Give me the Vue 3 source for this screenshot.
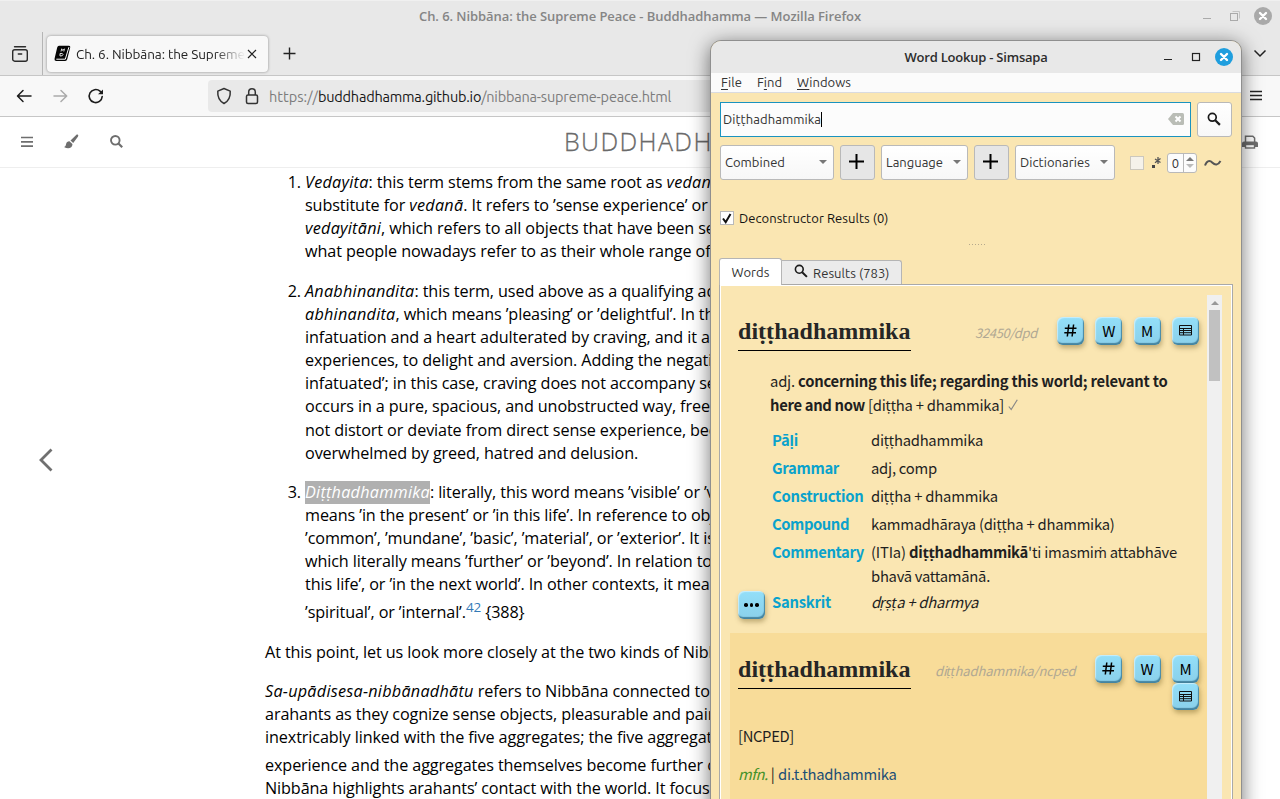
<script setup>
// Spreads the letters of a label so that it takes the given width in pixels.
const vFit = {
  mounted(el, { value }) {
    const count = [...el.textContent].length
    const natural = el.getBoundingClientRect().width
    el.style.letterSpacing = (value - natural) / count + 'px'
  },
}

const items = [
  {
    n: 1,
    lines: [
      '<i>Vedayita</i>: this term stems from the same root as <i>vedanā</i>, and is a',
      'substitute for <i>vedanā</i>. It refers to ’sense experience’ or to the',
      '<i>vedayitāni</i>, which refers to all objects that have been sensed',
      'what people nowadays refer to as their whole range of life',
    ],
  },
  {
    n: 2,
    lines: [
      '<i>Anabhinandita</i>: this term, used above as a qualifying adjective',
      '<i>abhinandita</i>, which means ’pleasing’ or ’delightful’. In this way',
      'infatuation and a heart adulterated by craving, and it also',
      'experiences, to delight and aversion. Adding the negative',
      'infatuated’; in this case, craving does not accompany sense',
      'occurs in a pure, spacious, and unobstructed way, free from',
      'not distort or deviate from direct sense experience, because',
      'overwhelmed by greed, hatred and delusion.',
    ],
  },
  {
    n: 3,
    lines: [
      '<i class="sel">Diṭṭhadhammika</i>: literally, this word means ’visible’ or ’visible',
      'means ’in the present’ or ’in this life’. In reference to objects',
      '’common’, ’mundane’, ’basic’, ’material’, or ’exterior’. It is the',
      'which literally means ’further’ or ’beyond’. In relation to time',
      'this life’, or ’in the next world’. In other contexts, it means',
      '’spiritual’, or ’internal’.<b class="note">42</b> {388}',
    ],
  },
]

const rows = [
  { k: 'Pāḷi', kw: 26, v: 'diṭṭhadhammika', w: 112 },
  { k: 'Grammar', kw: 67, v: 'adj, comp', w: 66 },
  { k: 'Construction', kw: 91.5, v: 'diṭṭha + dhammika', w: 127 },
  { k: 'Compound', kw: 77, v: 'kammadhāraya (diṭṭha + dhammika)', w: 243.5 },
]
</script>

<template>
  <div class="desk">
    <div class="ff-title">
      <span v-fit="442">Ch. 6. Nibbāna: the Supreme Peace - Buddhadhamma — Mozilla Firefox</span>
      <svg class="ff-ctl" width="80" height="32" viewBox="0 0 80 32" fill="none">
        <path d="M3 18.5h8" stroke="#aaa" />
        <path d="M32.5 11.5h7v7" stroke="#c4c4c4" />
        <rect x="30.500" y="13.500" width="7" height="7" stroke="#aaa" />
        <circle cx="63" cy="16" r="9" fill="#a9a9a9" />
        <path d="M60 13l6 6m0-6l-6 6" stroke="#fff" stroke-width="2.400" stroke-linecap="round" />
      </svg>
    </div>
    <div class="ff-tabs">
      <div class="ff-view">
        <svg width="18" height="18" viewBox="0 0 18 18" fill="none" stroke="#2b2b2b" stroke-width="1.400" stroke-linecap="round">
          <path d="M3.500 1.700h11" /><rect x="1.700" y="4.700" width="14.600" height="11.500" rx="2" /><path d="M7.300 9h3.400" />
        </svg>
      </div>
      <div class="ff-tab">
        <svg width="17" height="17" viewBox="0 0 17 17">
          <path d="M5 .8h10q1.600 0 1.200 1.600l-3 11.800q-.4 1.700-2 1.700H2Q0 15.800.6 13.500L3.200 2.400Q3.600.8 5 .8z" fill="#050505" />
          <path d="M2.300 14.200h9l3.600-12" stroke="#fff" stroke-width="1" fill="none" />
          <path d="M7 6.500l.7-2.700 1 1.700 1.700-1.700-.6 2.700M6 11V8.500q3-.6 3 1t-3 1.500" stroke="#ddd" fill="none" />
        </svg>
        <span class="ff-name"><span v-fit="169">Ch. 6. Nibbāna: the Supreme</span></span>
        <svg width="10" height="10" viewBox="0 0 10 10" stroke="#222" stroke-width="1.200"><path d="M1 1l8 8M9 1L1 9" /></svg>
      </div>
      <svg class="ff-plus" width="13" height="13" viewBox="0 0 13 13" stroke="#222" stroke-width="1.400"><path d="M6.500 .5v12M.5 6.500h12" /></svg>
      <svg class="ff-down" width="14" height="9" viewBox="0 0 14 9" fill="none" stroke="#222" stroke-width="1.500"><path d="M1.500 1.500L7 7l5.500-5.500" /></svg>
    </div>
    <div class="ff-nav">
      <svg class="ff-arrows" width="90" height="20" viewBox="0 0 90 20" fill="none" stroke-width="1.500" stroke-linecap="round" stroke-linejoin="round">
        <path d="M15 10H1.800M7 4.500L1.500 10 7 15.500" stroke="#1c1c1c" />
        <path d="M38 10h12.500M45 4.500L50.700 10 45 15.500" stroke="#aaa" />
        <path d="M86.200 10.500A6.500 6.500 0 1 1 84 5.200l2 1.800" stroke="#1c1c1c" stroke-width="1.600" />
        <path d="M87 3.500V8.200h-5z" fill="#1c1c1c" />
      </svg>
      <div class="ff-url">
        <svg width="16" height="18" viewBox="0 0 16 18" fill="none" stroke="#333" stroke-width="1.500"><path d="M8 1.500l6.200 2.600c.4 5-1 9.600-6.200 12.400C2.800 13.700 1.400 9.100 1.800 4.100z" stroke-linejoin="round" /></svg>
        <svg width="14" height="18" viewBox="0 0 14 18" fill="none" stroke="#333" stroke-width="1.500"><rect x="1.500" y="8" width="11" height="8.500" rx="1.500" /><path d="M3.700 8V5a3.300 3.300 0 0 1 6.600 0v3" /></svg>
        <span class="ff-addr"><span v-fit="49">https://</span><em v-fit="163">buddhadhamma.github.io</em><span v-fit="190">/nibbana-supreme-peace.html</span></span>
      </div>
      <svg class="ff-menu" width="14" height="12" viewBox="0 0 14 12" stroke="#222" stroke-width="1.300"><path d="M1 1.500h12M1 5.500h12M1 9.500h12" /></svg>
    </div>
    <div class="bar">
      <svg width="12" height="12" viewBox="0 0 12 12" stroke="#6e6e6e" stroke-width="1.700"><path d="M0 1.500h12M0 5.800h12M0 10.100h12" /></svg>
      <svg class="brush" width="15" height="15" viewBox="0 0 15 15" fill="#6e6e6e"><path d="M13.600.6c.9.5.8 1.300.3 2.100L9.200 9 6.500 6.600 12.200 1c.5-.5 1-.6 1.400-.4zM5.700 7.400l2.700 2.500c.4 4-4.200 5.700-8.400 3 1.800-.5 1.700-1.300 2.100-2.900.4-1.700 1.900-2.900 3.600-2.600z" /></svg>
      <svg class="glass" width="13" height="13" viewBox="0 0 13 13" fill="none" stroke="#6e6e6e"><circle cx="5.300" cy="5.300" r="4.300" stroke-width="1.900" /><path d="M8.500 8.500l3.700 3.700" stroke-width="2.200" /></svg>
      <span class="brand">BUDDHADHAMMA</span>
      <svg class="print" width="16" height="14" viewBox="0 0 16 14"><path d="M3.500 7V1.200h7.300l1.800 1.900V7" fill="#fff" stroke="#6e6e6e" stroke-width="1.500" /><path d="M0 8.500Q0 6.500 2 6.500h12q2 0 2 2V12h-3V9.500H3V12H0z" fill="#6e6e6e" /><rect x="3.500" y="9.500" width="9" height="3.500" fill="#fff" stroke="#6e6e6e" stroke-width="1.400" /></svg>
    </div>
    <div class="page">
      <div class="gutter">
        <svg width="14" height="24" viewBox="0 0 14 24" fill="none" stroke="#707070" stroke-width="2.800"><path d="M12.500 1.500L2 12l10.500 10.500" /></svg>
      </div>
      <div class="text">
        <div v-for="it in items" :key="it.n" class="item">
          <span class="num">{{ it.n }}.</span>
          <div><div v-for="(l, i) in it.lines" :key="i" class="line" :class="{ tall: it.n === 3 && i === 5 }" v-html="l"></div></div>
        </div>
        <div class="para"><div class="line">At this point, let us look more closely at the two kinds of Nibbāna:</div></div>
        <div class="para">
          <div class="line"><i>Sa-upādisesa-nibbānadhātu</i> refers to Nibbāna connected to the</div>
          <div class="line">arahants as they cognize sense objects, pleasurable and painful</div>
          <div class="line">inextricably linked with the five aggregates; the five aggregates</div>
          <div class="line tall">experience and the aggregates themselves become further clear</div>
          <div class="line">Nibbāna highlights arahants’ contact with the world. It focuses on</div>
        </div>
      </div>
    </div>

    <div class="win">
      <div class="w-title">
        <span v-fit="143">Word Lookup - Simsapa</span>
        <svg class="w-ctl" width="80" height="32" viewBox="0 0 80 32" fill="none">
          <path d="M4 18.500h8" stroke="#222" /><rect x="32.500" y="12.500" width="7" height="7" stroke="#222" stroke-width="1.200" />
          <circle cx="64" cy="16" r="9" fill="#1f9ede" /><path d="M61 13l6 6m0-6l-6 6" stroke="#fff" stroke-width="2.400" stroke-linecap="round" />
        </svg>
      </div>
      <div class="w-menu">
        <span v-fit="21"><u>F</u>ile</span><span v-fit="25">F<u>i</u>nd</span><span v-fit="54"><u>W</u>indows</span>
      </div>
      <div class="w-row">
        <div class="input">
          <span v-fit="98">Diṭṭhadhammika</span><i class="caret"></i>
          <svg width="16" height="12" viewBox="0 0 16 12"><path d="M0 6l5-6h9.500Q16 0 16 1.500v9q0 1.500-1.500 1.500H5z" fill="#babdb6" /><path d="M7.500 3.500l5 5m0-5l-5 5" stroke="#fff" stroke-width="2" /></svg>
        </div>
        <div class="btn white"><svg width="14" height="14" viewBox="0 0 14 14" fill="none" stroke="#1a1a1a"><circle cx="5.300" cy="5.300" r="3.900" stroke-width="1.700" /><path d="M8.200 8.200l4.700 4.700" stroke-width="2.200" /></svg></div>
      </div>
      <div class="w-row two">
        <div class="combo c1"><span v-fit="60">Combined</span><b class="tri"></b></div>
        <div class="btn"><svg width="15" height="15" viewBox="0 0 15 15" stroke="#000" stroke-width="2"><path d="M7.500 0v15M0 7.500h15" /></svg></div>
        <div class="combo c2"><span v-fit="57">Language</span><b class="tri"></b></div>
        <div class="btn"><svg width="15" height="15" viewBox="0 0 15 15" stroke="#000" stroke-width="2"><path d="M7.500 0v15M0 7.500h15" /></svg></div>
        <div class="combo c3"><span v-fit="70">Dictionaries</span><b class="tri"></b></div>
        <span class="check off"></span>
        <svg class="re" width="9" height="12" viewBox="0 0 9 12"><rect x="0" y="8" width="3" height="3" fill="#444" /><path d="M6 0v7M3 2l5.500 3.500M8.500 1.500L3 5.800" stroke="#555" stroke-width="1.300" /></svg>
        <div class="spin"><span>0</span><div><b class="up"></b><b class="dn"></b></div></div>
        <svg class="tilde" width="18" height="8" viewBox="0 0 18 8" fill="none" stroke="#555" stroke-width="2"><path d="M1 6.500C3 1 6 1.200 8.500 3.800S14 6.500 16.500 2" /></svg>
      </div>
      <div class="decon">
        <span class="check"><svg width="10" height="11" viewBox="0 0 10 11" fill="none" stroke="#111" stroke-width="2"><path d="M1 5.500l2.700 3.700L8.500 1" /></svg></span>
        <span v-fit="149.5">Deconstructor Results (0)</span>
      </div>
      <div class="dots"><b v-for="n in 6" :key="n"></b></div>
      <div class="tabs">
        <div class="t1"><span v-fit="38">Words</span></div>
        <div class="t2"><svg width="14" height="14" viewBox="0 0 14 14" fill="none" stroke="#1a1a1a"><circle cx="5.300" cy="5.300" r="3.900" stroke-width="1.600" /><path d="M8.200 8.200l4.700 4.700" stroke-width="2" /></svg><span v-fit="76.5">Results (783)</span></div>
      </div>
      <div class="pane">
        <div class="view">
          <section class="entry first">
            <div class="head">
              <h2><span v-fit="172.5">diṭṭhadhammika</span></h2>
              <span class="ref"><span v-fit="62">32450/dpd</span></span>
              <div class="keys">
                <b class="key"><svg width="13" height="13" viewBox="0 0 13 13" stroke="#000" stroke-width="1.500"><path d="M4.800.5L3.300 12.500M9.600.5L8.100 12.500M.8 4.200h11.700M.3 8.800h11.700" /></svg></b>
                <b class="key">W</b><b class="key">M</b>
                <b class="key"><svg width="13" height="11" viewBox="0 0 13 11" fill="none" stroke="#111" stroke-width="1"><path d="M.5.5h12v9.500H.5zM1 3.500h11M1 5.500h11M1 7.700h11M4.500 3.500V10" /></svg></b>
              </div>
            </div>
            <div class="def">
              <div><span v-fit="28">adj. </span><strong v-fit="369.5">concerning this life; regarding this world; relevant to</strong></div>
              <div><strong v-fit="95">here and now</strong><span v-fit="139"> [diṭṭha + dhammika]</span><svg class="tick" width="10" height="12" viewBox="0 0 10 12" fill="none" stroke="#888" stroke-width="1.200"><path d="M.8 7.500l2.400 3L9.300.7" /></svg></div>
            </div>
            <div class="gram">
              <div v-for="r in rows" :key="r.k" class="g"><strong><span v-fit="r.kw">{{ r.k }}</span></strong><span v-fit="r.w">{{ r.v }}</span></div>
              <div class="g"><strong><span v-fit="92">Commentary</span></strong><div><div><span v-fit="38">(ITIa) </span><b v-fit="119">diṭṭhadhammikā</b><span v-fit="149">'ti imasmi<span class="alt-m">ṁ</span> attabhāve</span></div><div><span v-fit="119">bhavā vattamānā.</span></div></div></div>
              <div class="g last"><b class="key more"><i></i><i></i><i></i></b><strong><span v-fit="59">Sanskrit</span></strong><em v-fit="107">dṛṣṭa + dharmya</em></div>
            </div>
          </section>
          <section class="entry alt">
            <div class="head">
              <h2><span v-fit="172.5">diṭṭhadhammika</span></h2>
              <span class="ref r2"><span v-fit="140.5">diṭṭhadhammika/ncped</span></span>
              <div class="keys k2">
                <b class="key"><svg width="13" height="13" viewBox="0 0 13 13" stroke="#000" stroke-width="1.500"><path d="M4.800.5L3.300 12.500M9.600.5L8.100 12.500M.8 4.200h11.700M.3 8.800h11.700" /></svg></b>
                <b class="key">W</b><b class="key">M</b>
                <b class="key"><svg width="13" height="11" viewBox="0 0 13 11" fill="none" stroke="#111" stroke-width="1"><path d="M.5.5h12v9.500H.5zM1 3.500h11M1 5.500h11M1 7.700h11M4.500 3.500V10" /></svg></b>
              </div>
            </div>
            <div class="nc"><span v-fit="56">[NCPED]</span></div>
            <div class="nc"><em class="green" v-fit="29.5">mfn.</em><span v-fit="10.5"> | </span><span class="navy" v-fit="118.5">di.t.thadhammika</span></div>
          </section>
        </div>
        <div class="scroll"><b class="sarrow"></b><div class="thumb"></div></div>
      </div>
    </div>
  </div>
</template>

<style>
html, body { margin: 0; overflow: hidden; }
</style>

<style scoped>
* { box-sizing: border-box; }
svg { display: block; flex: none; }
.desk { position: relative; width: 1280px; height: 799px; overflow: hidden; background: #fff; font: 13px "Ubuntu", "Noto Sans", sans-serif; color: #333; white-space: pre; }
.ff-title { position: relative; height: 32px; background: #e8e8e8; border-top: 1px solid #f0f0f0; display: flex; justify-content: center; align-items: center; padding-bottom: 2px; font-weight: 600; color: #858585; font-family: "Open Sans", sans-serif; }
.ff-ctl { position: absolute; right: 0; top: -1px; }
.ff-tabs { height: 44px; background: #e8e8e8; border-bottom: 1px solid #c6c6c6; display: flex; align-items: center; }
.ff-view { width: 43px; height: 43px; border-right: 1px solid #b5b5b5; padding: 13px 0 0 11px; }
.ff-tab { margin-left: 4px; width: 221px; height: 36px; background: #f8f8f8; border-radius: 4px; box-shadow: 0 0 3px rgba(0,0,0,.4); display: flex; align-items: center; padding-left: 7px; }
.ff-name { margin-left: 5px; width: 169px; overflow: hidden; margin-right: 2px; font-size: 13.5px; color: #222; -webkit-mask-image: linear-gradient(90deg, #000 82%, transparent); mask-image: linear-gradient(90deg, #000 82%, transparent); }
.ff-plus { margin-left: 15px; }
.ff-down { margin-left: auto; margin-right: 13px; }
.ff-nav { height: 41px; background: #f8f8f8; border-bottom: 1px solid #c6c6c6; display: flex; align-items: center; }
.ff-arrows { margin-left: 16px; }
.ff-url { margin-left: 102px; width: 990px; height: 32px; background: #e9e9e9; border-radius: 4px; display: flex; align-items: center; padding-left: 8px; }
.ff-url svg + svg { margin-left: 13px; }
.ff-addr { margin-left: 10px; font-size: 14.5px; color: #7c7c7c; }
.ff-addr em { font-style: normal; color: #161616; }
.ff-menu { margin-left: 51px; }
.bar { height: 51px; border-bottom: 1px solid #eee; display: flex; align-items: center; padding: 0 0 1px 21px; }
.brush { margin-left: 31px; }
.glass { margin-left: 31px; }
.brand { margin-left: 441px; width: 401px; padding-bottom: 2px; font: 300 25px/48px "Open Sans", sans-serif; color: #6a6a6a; letter-spacing: 1.4px; -webkit-text-stroke: .3px #6a6a6a; }
.print { margin-left: 277px; }
.page { display: flex; font: 16.2px/23.14px "Open Sans", "Noto Sans", sans-serif; color: #000; letter-spacing: -.11px; }
.gutter { width: 265px; padding: 280px 0 0 39px; }
.text { padding-top: 3.100px; }
.item { display: flex; margin-bottom: 16.200px; }
.num { width: 40px; text-align: right; padding-right: 4px; }
.line { height: 23.140px; }
.line.tall { height: 28px; padding-top: 4.860px; }
.line i, .line :deep(i) { letter-spacing: .26px; }
.line :deep(.sel) { background: #b0b0b0; color: #fff; display: inline-block; height: 23px; }
.line :deep(.note) { font-weight: 400; font-size: 13.500px; line-height: 0; color: #337ab7; vertical-align: 6px; }
.para { margin-bottom: 16.200px; }

.win { position: absolute; left: 710px; top: 40px; width: 532px; height: 780px; border: 1px solid #8f8f8f; border-radius: 11px 11px 0 0; background: #fae6b2; box-shadow: 0 4px 20px rgba(0,0,0,.55); overflow: hidden; }
.w-title { position: relative; height: 32px; background: #e8e8e8; display: flex; align-items: center; justify-content: center; font: 600 13px "Open Sans", sans-serif; color: #2c2c2c; }
.w-ctl { position: absolute; right: 1px; top: 0; }
.w-menu { height: 20px; background: #fbfbfb; border-bottom: 1px solid #d9dbe0; display: flex; gap: 15px; padding-left: 10px; line-height: 19px; }
u { text-underline-offset: 2px; }
.w-row { display: flex; gap: 6px; margin: 9px 0 0 9px; }
.input { width: 471px; height: 35px; border: 1px solid #1a93bf; background: #fcfcfc; display: flex; align-items: center; padding: 0 6px 1px 2px; }
.input svg { margin-left: auto; }
.caret { width: 1px; height: 15px; background: #000; }
.btn { width: 35px; height: 35px; background: #e6e6e6; border: 1px solid #b9b9b9; border-radius: 3px; display: flex; align-items: center; justify-content: center; padding: 0 2px 2px 0; }
.btn.white { background: linear-gradient(#fff, #f8f8f8); }
.w-row.two { margin-top: 8px; align-items: center; }
.combo { height: 35px; background: linear-gradient(#fff, #f7f7f7); border: 1px solid #b9b9b9; border-radius: 3px; display: flex; align-items: center; justify-content: space-between; padding: 0 6px 2px 4px; }
.c1 { width: 114px; } .c2 { width: 87px; } .c3 { width: 100px; }
.tri { border: 4px solid transparent; border-top: 4px solid #777; border-bottom: 0; }
.check { width: 14px; height: 14px; background: #fff; border: 1px solid #b9b9b9; display: flex; align-items: center; justify-content: center; }
.check.off { margin-left: 9px; background: #f5f2ea; border-color: #ccc8bd; }
.re { margin-left: 2px; }
.spin { width: 30px; height: 20px; border: 1px solid #b9b9b9; border-radius: 3px; background: #fcfcfc; display: flex; line-height: 18px; }
.spin span { width: 15px; text-align: center; }
.spin div { flex: 1; border-left: 1px solid #b9b9b9; display: flex; flex-direction: column; align-items: center; justify-content: center; gap: 3px; }
.up { border: 4px solid transparent; border-top: 0; border-bottom: 4px solid #777; }
.dn { border: 4px solid transparent; border-bottom: 0; border-top: 4px solid #bbb; }
.tilde { margin-left: 1px; }
.decon { display: flex; align-items: center; gap: 5px; height: 20px; margin: 28px 0 0 9px; color: #111; }
.dots { display: flex; gap: 2px; margin: 16px 0 0 258px; height: 1px; }
.dots b { width: 1px; background: #b5a98c; }
.tabs { height: 26px; margin: 13px 0 0 8px; display: flex; align-items: flex-end; position: relative; }
.t1 { width: 63px; height: 27px; background: #fff; border: 1px solid #b5b5b5; border-bottom: 0; border-radius: 3px 3px 0 0; text-align: center; line-height: 26px; margin-bottom: -1px; z-index: 1; }
.t2 { width: 120px; height: 24px; background: #ebebeb; border: 1px solid #b5b5b5; border-width: 1px 1px 0 0; border-radius: 0 3px 0 0; display: flex; align-items: center; padding-left: 12px; gap: 5px; }
.t2 svg { margin-top: -3px; }
.pane { margin-left: 8px; width: 514px; height: 530px; border: 1px solid #a9a9a9; box-shadow: inset 1px 1px #fff, inset -1px 0 #fff; display: flex; padding: 10px 9px 0 10px; }
.view { width: 477px; height: 520px; font: 14.8px/24px "Source Sans Pro", "Noto Sans CJK SC", "Noto Sans", sans-serif; color: #1f1f1f; }
.entry { padding: 0 8px; }
.first { height: 338px; }
.alt { height: 200px; background: #f8dc99; }
.head { display: flex; align-items: flex-start; height: 74px; padding-top: 22px; }
.alt .head { height: 91px; }
h2 { margin: 0; width: 173px; height: 34px; border-bottom: 1px solid #000; font: bold 24px/28px "Source Serif Pro", "Liberation Serif", serif; color: #262626; }
.ref { margin-left: 64px; font-size: 13px; font-style: italic; color: #b0a893; line-height: 31px; }
.r2 { margin-left: 24px; }
.keys { display: flex; gap: 11.300px; margin-left: auto; }
.key { width: 27px; height: 27.500px; border-radius: 6px; background: linear-gradient(#93dff9, #8ad0ea); box-shadow: inset -1px -2px 1px rgba(30,90,120,.65), inset 1px 1px 1px rgba(255,255,255,.5), 1px 3px 5px rgba(80,60,0,.35); display: flex; align-items: center; justify-content: center; font: 400 15px/27px "Noto Sans CJK SC", sans-serif; color: #000; }
.k2 { width: 104px; flex-wrap: wrap; justify-content: flex-end; row-gap: 0; }
.def { padding-left: 32px; }
.tick { display: inline-block; margin-left: 4px; }
.gram { padding: 9px 0 0 34px; }
.g { display: flex; min-height: 28px; line-height: 28px; position: relative; }
.g > strong { width: 99px; flex: none; color: #0aa2cc; }
.g > div { line-height: 24px; padding-top: 2px; }
.alt-m { font-family: "Noto Sans", sans-serif; font-size: 14px; line-height: 0; }
.more { position: absolute; left: -34px; top: 3px; gap: 2px; }
.more i { width: 3.500px; height: 3.500px; border-radius: 50%; background: #000; }
.nc { height: 38px; line-height: 24px; }
.green { color: #46922a; }
.navy { color: #1c4e75; }
.scroll { width: 15px; height: 520px; background: #f0f0f0; display: flex; flex-direction: column; align-items: center; padding-top: 6px; }
.sarrow { border: 4px solid transparent; border-top: 0; border-bottom: 4px solid #999; }
.thumb { width: 11px; height: 71px; background: #c1c1c1; margin-top: 5px; }
</style>
